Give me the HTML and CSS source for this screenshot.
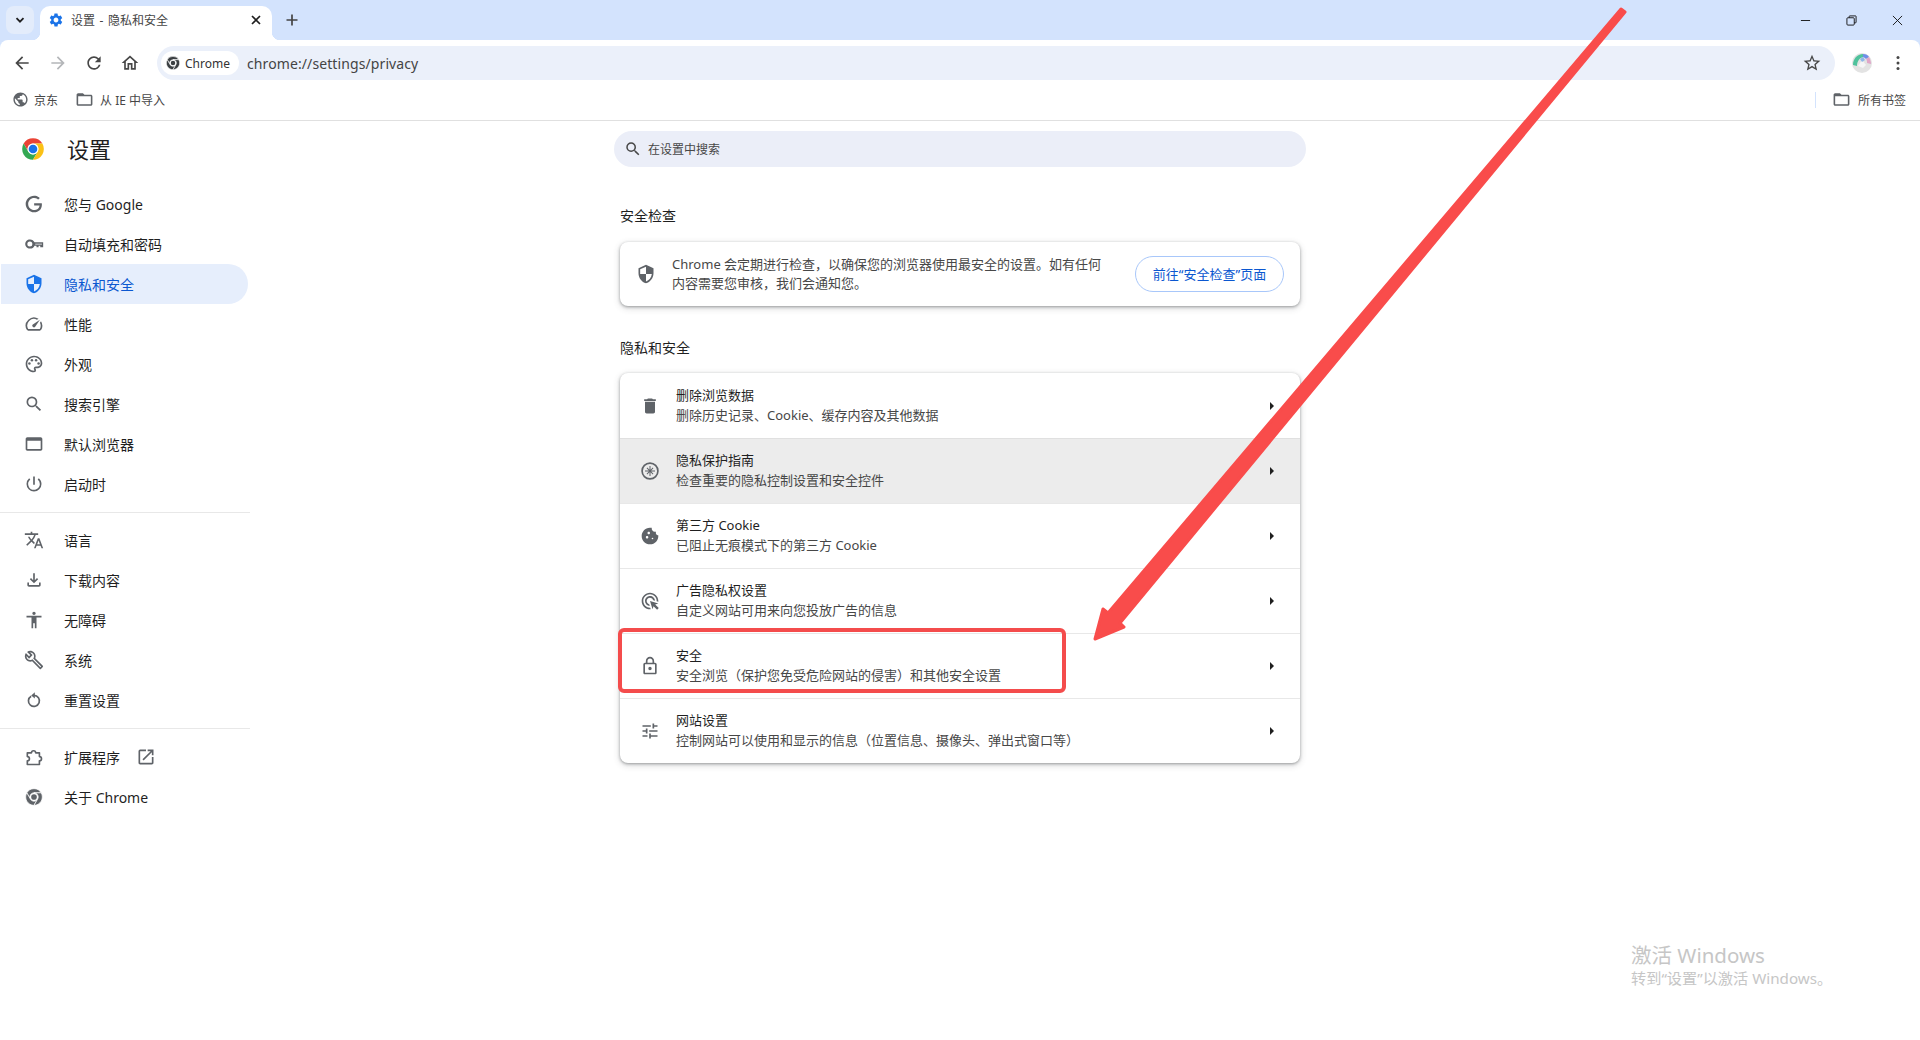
FILE: index.html
```html
<!DOCTYPE html>
<html lang="zh-CN">
  <head>
    <meta charset="UTF-8" />
    <title>设置 - 隐私和安全</title>
    <link rel="stylesheet" href="styles.css">
  </head>
  <body>
    <svg class="sprite" width="0" height="0">
      <symbol id="i-gear" viewBox="0 0 24 24"><path d="M19.14 12.94c.04-.3.06-.61.06-.94 0-.32-.02-.64-.07-.94l2.03-1.58a.49.49 0 0 0 .12-.61l-1.92-3.32a.488.488 0 0 0-.59-.22l-2.39.96c-.5-.38-1.03-.7-1.62-.94l-.36-2.54a.484.484 0 0 0-.48-.41h-3.84c-.24 0-.43.17-.47.41l-.36 2.54c-.59.24-1.13.57-1.62.94l-2.39-.96c-.22-.08-.47 0-.59.22L2.74 8.87c-.12.21-.08.47.12.61l2.03 1.58c-.05.3-.09.63-.09.94s.02.64.07.94l-2.03 1.58a.49.49 0 0 0-.12.61l1.92 3.32c.12.22.37.29.59.22l2.39-.96c.5.38 1.03.7 1.62.94l.36 2.54c.05.24.24.41.48.41h3.84c.24 0 .44-.17.47-.41l.36-2.54c.59-.24 1.13-.56 1.62-.94l2.39.96c.22.08.47 0 .59-.22l1.92-3.32c.12-.22.07-.47-.12-.61l-2.01-1.58zM12 15.6c-1.98 0-3.6-1.62-3.6-3.6s1.62-3.6 3.6-3.6 3.6 1.62 3.6 3.6-1.62 3.6-3.6 3.6z"/></symbol>
      <symbol id="i-back" viewBox="0 0 24 24"><path d="M20 11H7.83l5.59-5.59L12 4l-8 8 8 8 1.41-1.41L7.83 13H20v-2z"/></symbol>
      <symbol id="i-forward" viewBox="0 0 24 24"><path d="M12 4l-1.41 1.41L16.17 11H4v2h12.17l-5.58 5.59L12 20l8-8z"/></symbol>
      <symbol id="i-reload" viewBox="0 0 24 24"><path d="M17.65 6.35A7.958 7.958 0 0 0 12 4c-4.42 0-7.99 3.58-7.99 8s3.57 8 7.99 8c3.73 0 6.84-2.55 7.73-6h-2.08A5.99 5.99 0 0 1 12 18c-3.31 0-6-2.69-6-6s2.69-6 6-6c1.66 0 3.14.69 4.22 1.78L13 11h7V4l-2.35 2.35z"/></symbol>
      <symbol id="i-home" viewBox="0 0 24 24"><path d="M12 5.69l5 4.5V18h-2v-6H9v6H7v-7.81l5-4.5M12 3L2 12h3v8h6v-6h2v6h6v-8h3L12 3z"/></symbol>
      <symbol id="i-chrome" viewBox="0 0 24 24"><g stroke="#fff" stroke-width="0.9"><path d="M12 2A10 10 0 0 1 20.66 7H12A5 5 0 0 0 7.67 14.5L3.34 7A10 10 0 0 1 12 2Z"/><path d="M3.34 7L7.67 14.5A5 5 0 0 0 16.33 14.5L12 22A10 10 0 0 1 3.34 7Z"/><path d="M20.66 7H12A5 5 0 0 1 16.33 14.5L12 22A10 10 0 0 0 20.66 7Z"/></g><circle cx="12" cy="12" r="3.4"/></symbol>
      <symbol id="i-star" viewBox="0 0 24 24"><path d="M22 9.24l-7.19-.62L12 2 9.19 8.63 2 9.24l5.46 4.73L5.82 21 12 17.27 18.18 21l-1.63-7.03L22 9.24zM12 15.4l-3.76 2.27 1-4.28-3.32-2.88 4.38-.38L12 6.1l1.71 4.04 4.38.38-3.32 2.88 1 4.28L12 15.4z"/></symbol>
      <symbol id="i-more" viewBox="0 0 24 24"><circle cx="12" cy="5.5" r="1.8"/><circle cx="12" cy="12" r="1.8"/><circle cx="12" cy="18.5" r="1.8"/></symbol>
      <symbol id="i-globe" viewBox="0 0 24 24"><path d="M12 2C6.48 2 2 6.48 2 12s4.48 10 10 10 10-4.48 10-10S17.52 2 12 2zm-1 17.93c-3.95-.49-7-3.85-7-7.93 0-.62.08-1.21.21-1.79L9 15v1c0 1.1.9 2 2 2v1.93zm6.9-2.54c-.26-.81-1-1.39-1.9-1.39h-1v-3c0-.55-.45-1-1-1H8v-2h2c.55 0 1-.45 1-1V7h2c1.1 0 2-.9 2-2v-.41c2.93 1.19 5 4.06 5 7.41 0 2.08-.8 3.97-2.1 5.39z"/></symbol>
      <symbol id="i-folder" viewBox="0 0 24 24"><path d="M20 6h-8l-2-2H4c-1.1 0-1.99.9-1.99 2L2 18c0 1.1.9 2 2 2h16c1.1 0 2-.9 2-2V8c0-1.1-.9-2-2-2zm0 12H4V8h16v10z"/></symbol>
      <symbol id="i-google" viewBox="0 0 24 24"><path d="M21.35 11.1h-9.17v2.73h6.51c-.33 3.81-3.5 5.44-6.5 5.44C8.36 19.27 5 16.25 5 12c0-4.1 3.2-7.27 7.2-7.27 3.09 0 4.9 1.97 4.9 1.97L19 4.72S16.56 2 12.1 2C6.42 2 2.03 6.8 2 12c0 5.05 4.13 10 10.22 10 5.35 0 9.25-3.67 9.25-9.09 0-1.15-.15-1.81-.12-1.81z"/></symbol>
      <symbol id="i-key" viewBox="0 0 24 24"><path fill-rule="evenodd" d="M12.65 10A5.99 5.99 0 0 0 7 6.5c-3.04 0-5.5 2.46-5.5 5.5s2.46 5.5 5.5 5.5a5.99 5.99 0 0 0 5.65-3.5H15v2h2.5v-2h2v2H23v-6H12.65zM7 9a3 3 0 1 1 0 6 3 3 0 0 1 0-6zm6.5 2.6h8v1h-8z"/></symbol>
      <symbol id="i-shield" viewBox="0 0 24 24"><path d="M12 1L3 5v6c0 5.55 3.84 10.74 9 12 5.16-1.26 9-6.45 9-12V5l-9-4zm0 10.99h7c-.53 4.12-3.28 7.79-7 8.94V12H5V6.3l7-3.11v8.8z"/></symbol>
      <symbol id="i-speed" viewBox="0 0 24 24"><path d="M20.38 8.57l-1.23 1.85a8 8 0 0 1-.22 7.58H5.07A8 8 0 0 1 15.58 6.85l1.85-1.23A10 10 0 0 0 3.35 19a2 2 0 0 0 1.72 1h13.85a2 2 0 0 0 1.74-1 10 10 0 0 0-.27-10.44zm-9.79 6.84a2 2 0 0 0 2.83 0l5.66-8.49-8.49 5.66a2 2 0 0 0 0 2.83z"/></symbol>
      <symbol id="i-palette" viewBox="0 0 24 24"><path d="M12 22C6.49 22 2 17.51 2 12S6.49 2 12 2s10 4.04 10 9c0 3.31-2.69 6-6 6h-1.77c-.28 0-.5.22-.5.5 0 .12.05.23.13.33.41.47.64 1.06.64 1.67A2.5 2.5 0 0 1 12 22zm0-18c-4.41 0-8 3.59-8 8s3.59 8 8 8c.28 0 .5-.22.5-.5a.54.54 0 0 0-.14-.35c-.41-.46-.63-1.05-.63-1.65a2.5 2.5 0 0 1 2.5-2.5H16c2.21 0 4-1.79 4-4 0-3.86-3.59-7-8-7z"/><circle cx="6.5" cy="11.5" r="1.5"/><circle cx="9.5" cy="7.5" r="1.5"/><circle cx="14.5" cy="7.5" r="1.5"/><circle cx="17.5" cy="11.5" r="1.5"/></symbol>
      <symbol id="i-search" viewBox="0 0 24 24"><path d="M15.5 14h-.79l-.28-.27A6.471 6.471 0 0 0 16 9.5 6.5 6.5 0 1 0 9.5 16c1.61 0 3.09-.59 4.23-1.57l.27.28v.79l5 4.99L20.49 19l-4.99-5zm-6 0C7.01 14 5 11.99 5 9.5S7.01 5 9.5 5 14 7.01 14 9.5 11.99 14 9.5 14z"/></symbol>
      <symbol id="i-window" viewBox="0 0 24 24"><path d="M20 4H4c-1.11 0-2 .9-2 2v12c0 1.1.89 2 2 2h16c1.1 0 2-.9 2-2V6c0-1.1-.89-2-2-2zm0 14H4V8h16v10z"/></symbol>
      <symbol id="i-power" viewBox="0 0 24 24"><path d="M13 3h-2v10h2V3zm4.83 2.17l-1.42 1.42A6.92 6.92 0 0 1 19 12c0 3.87-3.13 7-7 7A6.995 6.995 0 0 1 7.58 6.58L6.17 5.17A8.932 8.932 0 0 0 3 12a9 9 0 0 0 18 0c0-2.74-1.23-5.18-3.17-6.83z"/></symbol>
      <symbol id="i-translate" viewBox="0 0 24 24"><path d="M12.87 15.07l-2.54-2.51.03-.03A17.52 17.52 0 0 0 14.07 6H17V4h-7V2H8v2H1v1.99h11.17C11.5 7.92 10.44 9.75 9 11.35 8.07 10.32 7.3 9.19 6.69 8h-2c.73 1.63 1.73 3.17 2.98 4.56l-5.09 5.02L4 19l5-5 3.11 3.11.76-2.04zM18.5 10h-2L12 22h2l1.12-3h4.75L21 22h2l-4.5-12zm-2.62 7l1.62-4.33L19.12 17h-3.24z"/></symbol>
      <symbol id="i-download" viewBox="0 0 24 24"><path d="M18 15v3H6v-3H4v3c0 1.1.9 2 2 2h12c1.1 0 2-.9 2-2v-3h-2zm-1-4l-1.41-1.41L13 12.17V4h-2v8.17L8.41 9.59 7 11l5 5 5-5z"/></symbol>
      <symbol id="i-access" viewBox="0 0 24 24"><path d="M12 2c1.1 0 2 .9 2 2s-.9 2-2 2-2-.9-2-2 .9-2 2-2zm9 7h-6v13h-2v-6h-2v6H9V9H3V7h18v2z"/></symbol>
      <symbol id="i-wrench" viewBox="0 0 24 24"><path d="M22.61 18.99l-9.08-9.08c.93-2.34.45-5.1-1.44-7C9.79.61 6.21.4 3.66 2.25L7.5 6.1 6.08 7.51 2.25 3.69C.4 6.23.61 9.82 2.91 12.11c1.86 1.86 4.57 2.35 6.89 1.48l9.11 9.11c.39.39 1.02.39 1.41 0l2.3-2.3c.4-.38.4-1.01-.01-1.41zm-3 1.6l-9.46-9.46c-.61.45-1.29.72-2 .82-1.36.2-2.79-.21-3.83-1.25C3.37 9.76 2.93 8.5 3 7.26l3.09 3.09 4.24-4.24-3.09-3.09c1.24-.07 2.49.37 3.44 1.31 1.08 1.08 1.49 2.57 1.24 3.96-.12.71-.42 1.37-.88 1.96l9.45 9.45-.88.89z"/></symbol>
      <symbol id="i-reset" viewBox="0 0 24 24"><path d="M8.6 7.4A6.6 6.6 0 1 0 12 6.5" fill="none" stroke="#5f6368" stroke-width="2"/><path d="M13 2.8v7.4L8.6 6.5z"/></symbol>
      <symbol id="i-ext" viewBox="0 0 24 24"><path d="M4 7h5a2.5 2.5 0 0 1 5 0h4.5v4.5a2.5 2.5 0 0 1 0 5V21H4v-4.5a2.5 2.5 0 0 0 0-5z" fill="none" stroke="#5f6368" stroke-width="2" stroke-linejoin="round"/></symbol>
      <symbol id="i-open" viewBox="0 0 24 24"><path d="M19 19H5V5h7V3H5a2 2 0 0 0-2 2v14c0 1.1.9 2 2 2h14c1.1 0 2-.9 2-2v-7h-2v7zM14 3v2h3.59l-9.83 9.83 1.41 1.41L19 6.41V10h2V3h-7z"/></symbol>
      <symbol id="i-trash" viewBox="0 0 24 24"><path d="M6 19c0 1.1.9 2 2 2h8c1.1 0 2-.9 2-2V7H6v12zM19 4h-3.5l-1-1h-5l-1 1H5v2h14V4z"/></symbol>
      <symbol id="i-guide" viewBox="0 0 24 24"><path fill-rule="evenodd" d="M12 1.5a10.5 10.5 0 1 1 0 21 10.5 10.5 0 0 1 0-21zm0 2a8.5 8.5 0 1 0 0 17 8.5 8.5 0 0 0 0-17z"/><path d="M11.4 6h1.2v12h-1.2zM6 11.4h12v1.2H6zM7.9 8.7l.8-.8 7.4 7.4-.8.8zM15.3 7.9l.8.8-7.4 7.4-.8-.8z"/></symbol>
      <symbol id="i-cookie" viewBox="0 0 24 24"><path d="M21.95 10.99c-1.79-.03-3.7-1.95-2.68-4.22-2.97 1-5.78-1.59-5.19-4.56C7.11.74 2 6.41 2 12c0 5.52 4.48 10 10 10 5.89 0 10.54-5.08 9.95-11.01zM8.5 15c-.83 0-1.5-.67-1.5-1.5S7.67 12 8.5 12s1.5.67 1.5 1.5S9.33 15 8.5 15zm2-5C9.67 10 9 9.33 9 8.5S9.67 7 10.5 7s1.5.67 1.5 1.5-.67 1.5-1.5 1.5zm4.5 6c-.55 0-1-.45-1-1s.45-1 1-1 1 .45 1 1-.45 1-1 1z"/></symbol>
      <symbol id="i-ads" viewBox="0 0 24 24"><path d="M11.71 17.99A5.993 5.993 0 0 1 6 12c0-3.31 2.69-6 6-6 3.22 0 5.84 2.53 5.99 5.71l-2.1-.63A3.999 3.999 0 0 0 12 8c-2.21 0-4 1.79-4 4 0 1.89 1.31 3.47 3.08 3.89l.63 2.1zM22 12c0 .3-.01.6-.04.9l-1.97-.59c.01-.1.01-.21.01-.31 0-4.42-3.58-8-8-8s-8 3.58-8 8 3.58 8 8 8c.1 0 .21 0 .31-.01l.59 1.97c-.3.03-.6.04-.9.04-5.52 0-10-4.48-10-10S6.48 2 12 2s10 4.48 10 10zm-3.77 4.26L22 15l-10-3 3 10 1.26-3.77 4.27 4.27 1.98-1.98-4.28-4.26z"/></symbol>
      <symbol id="i-lock" viewBox="0 0 24 24"><path d="M18 8h-1V6c0-2.76-2.24-5-5-5S7 3.24 7 6v2H6c-1.1 0-2 .9-2 2v10c0 1.1.9 2 2 2h12c1.1 0 2-.9 2-2V10c0-1.1-.9-2-2-2zM9 6c0-1.66 1.34-3 3-3s3 1.34 3 3v2H9V6zm9 14H6V10h12v10zm-6-3c1.1 0 2-.9 2-2s-.9-2-2-2-2 .9-2 2 .9 2 2 2z"/></symbol>
      <symbol id="i-tune" viewBox="0 0 24 24"><path d="M3 17v2h6v-2H3zM3 5v2h10V5H3zm10 16v-2h8v-2h-8v-2h-2v6h2zM7 9v2H3v2h4v2h2V9H7zm14 4v-2H11v2h10zm-6-4h2V7h4V5h-4V3h-2v6z"/></symbol>
    </svg>

    <header class="chrome">
      <div class="tabstrip">
        <button class="tabs-btn">
          <svg viewBox="0 0 12 12" class="chev"><path d="M2.5 4.2L6 7.7l3.5-3.5" /></svg>
        </button>
        <div class="tab">
          <svg class="ic16 blue"><use href="#i-gear" /></svg>
          <span class="tab-title">设置 - 隐私和安全</span>
          <svg viewBox="0 0 12 12" class="tab-close"><path d="M2 2l8 8M10 2l-8 8" /></svg>
        </div>
        <svg viewBox="0 0 14 14" class="tab-new"><path d="M7 1.5v11M1.5 7h11" /></svg>
        <div class="winctl">
          <span class="winbtn"><svg viewBox="0 0 12 12"><path d="M1 6h10" /></svg></span>
          <span class="winbtn"><svg viewBox="0 0 12 12"><rect x="1" y="3" width="8" height="8" rx="1" /><path d="M3.5 3V1.5a.5.5 0 0 1 .5-.5h6.5a.5.5 0 0 1 .5.5V8a.5.5 0 0 1-.5.5H9" /></svg></span>
          <span class="winbtn"><svg viewBox="0 0 12 12"><path d="M1 1l10 10M11 1L1 11" /></svg></span>
        </div>
      </div>

      <div class="toolbar">
        <span class="tool"><svg class="ic20"><use href="#i-back" /></svg></span>
        <span class="tool off"><svg class="ic20"><use href="#i-forward" /></svg></span>
        <span class="tool"><svg class="ic20"><use href="#i-reload" /></svg></span>
        <span class="tool"><svg class="ic20"><use href="#i-home" /></svg></span>
        <div class="omnibox">
          <span class="chip"><svg class="ic16 dark"><use href="#i-chrome" /></svg>Chrome</span>
          <span class="url">chrome://settings/privacy</span>
          <svg class="ic20 star"><use href="#i-star" /></svg>
        </div>
        <span class="tool">
          <svg viewBox="0 0 20 20" class="avatar">
            <circle cx="10" cy="10" r="10" fill="#e3e3e3" />
            <path d="M1 12C1 6 5 1 11 1l1 3C8 4 5 8 5 13z" fill="#4fc29c" />
            <path d="M11 1c3 0 5 1 6 3l-3 2c-1-1-2-2-3-2z" fill="#6f8ee8" />
            <path d="M17 4c1 2 2 4 2 7l-4-1c0-2 0-3-1-4z" fill="#e0a6c8" />
            <path d="M6 13l4-6 4 5-3 3z" fill="#f6f6f6" />
            <path d="M8 6l3-2 2 3-3 2z" fill="#8fb6e8" />
          </svg>
        </span>
        <span class="tool"><svg class="ic20"><use href="#i-more" /></svg></span>
      </div>

      <div class="bookmarks">
        <span class="bm"><svg class="ic17"><use href="#i-globe" /></svg>京东</span>
        <span class="bm bm-folder"><svg class="ic19"><use href="#i-folder" /></svg>从 IE 中导入</span>
        <span class="bm-sep"></span>
        <span class="bm bm-all"><svg class="ic19"><use href="#i-folder" /></svg>所有书签</span>
      </div>
    </header>

    <div class="page">
      <nav class="side">
        <div class="side-head">
          <svg viewBox="0 0 24 24" class="logo">
            <path fill="#ea4335" d="M12 2A10 10 0 0 1 20.66 7H12A5 5 0 0 0 7.67 14.5L3.34 7A10 10 0 0 1 12 2Z" />
            <path fill="#34a853" d="M3.34 7L7.67 14.5A5 5 0 0 0 16.33 14.5L12 22A10 10 0 0 1 3.34 7Z" />
            <path fill="#fbc116" d="M20.66 7H12A5 5 0 0 1 16.33 14.5L12 22A10 10 0 0 0 20.66 7Z" />
            <circle cx="12" cy="12" r="5" fill="#fff" />
            <circle cx="12" cy="12" r="4" fill="#1a73e8" />
          </svg>
          <span class="side-title">设置</span>
        </div>
        <a class="item"><svg class="ic20"><use href="#i-google" /></svg>您与 Google</a>
        <a class="item"><svg class="ic20"><use href="#i-key" /></svg>自动填充和密码</a>
        <a class="item active"><svg class="ic20"><use href="#i-shield" /></svg>隐私和安全</a>
        <a class="item"><svg class="ic20"><use href="#i-speed" /></svg>性能</a>
        <a class="item"><svg class="ic20"><use href="#i-palette" /></svg>外观</a>
        <a class="item"><svg class="ic20"><use href="#i-search" /></svg>搜索引擎</a>
        <a class="item"><svg class="ic20"><use href="#i-window" /></svg>默认浏览器</a>
        <a class="item"><svg class="ic20"><use href="#i-power" /></svg>启动时</a>
        <hr class="tight" />
        <a class="item"><svg class="ic20"><use href="#i-translate" /></svg>语言</a>
        <a class="item"><svg class="ic20"><use href="#i-download" /></svg>下载内容</a>
        <a class="item"><svg class="ic20"><use href="#i-access" /></svg>无障碍</a>
        <a class="item"><svg class="ic20"><use href="#i-wrench" /></svg>系统</a>
        <a class="item"><svg class="ic20"><use href="#i-reset" /></svg>重置设置</a>
        <hr />
        <a class="item"><svg class="ic20"><use href="#i-ext" /></svg>扩展程序<svg class="ic20 open"><use href="#i-open" /></svg></a>
        <a class="item"><svg class="ic20"><use href="#i-chrome" /></svg>关于 Chrome</a>
      </nav>

      <main class="content">
        <div class="search">
          <svg class="ic18"><use href="#i-search" /></svg>
          <span>在设置中搜索</span>
        </div>

        <section class="group">
          <h2 class="first">安全检查</h2>
          <div class="card check">
            <svg class="ic20"><use href="#i-shield" /></svg>
            <p>Chrome 会定期进行检查，以确保您的浏览器使用最安全的设置。如有任何内容需要您审核，我们会通知您。</p>
            <button class="go">前往“安全检查”页面</button>
          </div>
        </section>

        <section class="group">
          <h2>隐私和安全</h2>
          <div class="card">
            <div class="row">
              <svg class="ic20"><use href="#i-trash" /></svg>
              <div class="row-text"><div class="label">删除浏览数据</div><div class="sub">删除历史记录、Cookie、缓存内容及其他数据</div></div>
              <i class="arrow"></i>
            </div>
            <div class="row hover">
              <svg class="ic20"><use href="#i-guide" /></svg>
              <div class="row-text"><div class="label">隐私保护指南</div><div class="sub">检查重要的隐私控制设置和安全控件</div></div>
              <i class="arrow"></i>
            </div>
            <div class="row">
              <svg class="ic20"><use href="#i-cookie" /></svg>
              <div class="row-text"><div class="label">第三方 Cookie</div><div class="sub">已阻止无痕模式下的第三方 Cookie</div></div>
              <i class="arrow"></i>
            </div>
            <div class="row">
              <svg class="ic20"><use href="#i-ads" /></svg>
              <div class="row-text"><div class="label">广告隐私权设置</div><div class="sub">自定义网站可用来向您投放广告的信息</div></div>
              <i class="arrow"></i>
            </div>
            <div class="row">
              <svg class="ic20"><use href="#i-lock" /></svg>
              <div class="row-text"><div class="label">安全</div><div class="sub">安全浏览（保护您免受危险网站的侵害）和其他安全设置</div></div>
              <i class="arrow"></i>
              <div class="mark"></div>
            </div>
            <div class="row">
              <svg class="ic20"><use href="#i-tune" /></svg>
              <div class="row-text"><div class="label">网站设置</div><div class="sub">控制网站可以使用和显示的信息（位置信息、摄像头、弹出式窗口等）</div></div>
              <i class="arrow"></i>
            </div>
          </div>
        </section>
      </main>
    </div>

    <!-- red annotation arrow drawn over the screenshot -->
    <svg class="annot" viewBox="0 0 1920 1040">
      <path d="M1621 9L1625 12L1120 623L1124 627L1095 639L1103 609L1108 613Z" />
    </svg>

    <div class="watermark">
      <div class="wm-big">激活 Windows</div>
      <div class="wm-small">转到“设置”以激活 Windows。</div>
    </div>
  </body>
</html>
```

FILE: styles.css
```css
* {
  box-sizing: border-box;
}
body {
  position: relative;
  margin: 0;
  height: 1040px;
  overflow: hidden;
  background: #fff;
  color: #1f1f1f;
  font-family: "Noto Sans", "Noto Sans CJK SC", sans-serif;
  font-size: 14px;
}
.sprite {
  position: absolute;
}
svg {
  flex: none;
  fill: #5f6368;
}
.ic16 {
  width: 16px;
  height: 16px;
}
.ic17 {
  width: 17px;
  height: 17px;
}
.ic18 {
  width: 18px;
  height: 18px;
}
.ic19 {
  width: 19px;
  height: 19px;
}
.ic20 {
  width: 20px;
  height: 20px;
}
.blue {
  fill: #1a73e8;
}
.dark {
  fill: #3c4043;
}

/* browser frame */
.tabstrip {
  display: flex;
  align-items: flex-start;
  height: 40px;
  background: #d3e3fd;
}
.tabs-btn {
  width: 28px;
  height: 28px;
  margin: 6px 6px 0;
  padding: 0;
  border: none;
  border-radius: 8px;
  background: #e3ecfb;
  display: flex;
  align-items: center;
  justify-content: center;
}
.chev {
  width: 12px;
  height: 12px;
  fill: none;
  stroke: #1f1f1f;
  stroke-width: 1.8;
}
.tab {
  position: relative;
  display: flex;
  align-items: center;
  width: 232px;
  height: 34px;
  margin-top: 6px;
  padding: 0 10px 6px 8px;
  background: #fff;
  border-radius: 10px 10px 0 0;
  font-size: 12px;
}
.tab::before,
.tab::after {
  content: "";
  position: absolute;
  bottom: 0;
  width: 8px;
  height: 8px;
}
.tab::before {
  left: -8px;
  background: radial-gradient(circle at 0 0, #d3e3fd 8px, #fff 8.5px);
}
.tab::after {
  right: -8px;
  background: radial-gradient(circle at 100% 0, #d3e3fd 8px, #fff 8.5px);
}
.tab-title {
  flex: 1;
  margin-left: 7px;
  color: #444;
  word-spacing: 1.5px;
}
.tab-close {
  width: 12px;
  height: 12px;
  fill: none;
  stroke: #1f1f1f;
  stroke-width: 1.7;
}
.tab-new {
  width: 14px;
  height: 14px;
  margin: 13px 0 0 13px;
  fill: none;
  stroke: #444;
  stroke-width: 1.7;
}
.winctl {
  display: flex;
  margin-left: auto;
}
.winbtn {
  display: flex;
  align-items: center;
  justify-content: center;
  width: 46px;
  height: 40px;
}
.winbtn svg {
  width: 11px;
  height: 11px;
  fill: none;
  stroke: #111;
  stroke-width: 1;
}

.toolbar {
  display: flex;
  align-items: center;
  height: 46px;
  padding: 6px 4px;
  background: #fff;
  border-radius: 8px 8px 0 0;
}
.chrome {
  background: #d3e3fd;
}
.tool {
  display: flex;
  align-items: center;
  justify-content: center;
  width: 36px;
  height: 34px;
}
.tool svg {
  fill: #474747;
}
.tool.off svg {
  fill: #b4b6b9;
}
.omnibox {
  flex: 1;
  display: flex;
  align-items: center;
  height: 34px;
  margin: 0 9px;
  padding-left: 4px;
  padding-right: 13px;
  background: #ebf0fa;
  border-radius: 17px;
}
.chip {
  display: flex;
  align-items: center;
  gap: 4px;
  width: 78px;
  height: 24px;
  padding-left: 4px;
  background: #fff;
  border-radius: 12px;
  font-size: 12px;
  color: #333;
}
.url {
  flex: 1;
  margin-left: 8px;
  font-size: 14px;
  letter-spacing: 0.1px;
  color: #444;
}
.star {
  fill: #474747;
}
.avatar {
  width: 20px;
  height: 20px;
}
.bookmarks {
  display: flex;
  align-items: center;
  height: 35px;
  padding: 0 14px 7px 12px;
  background: #fff;
  border-bottom: 1px solid #e0e0e0;
  font-size: 12px;
  color: #474747;
}
.bm {
  display: flex;
  align-items: center;
  gap: 5px;
}
.bm-folder {
  margin-left: 17px;
  gap: 6px;
}
.bm-sep {
  width: 1px;
  height: 16px;
  margin-left: auto;
  background: #d3e3fd;
}
.bm-all {
  margin-left: 16px;
  gap: 7px;
}

/* settings page */
.page {
  display: grid;
  grid-template-columns: 250px 1fr 250px;
  background: #fff;
}
.side hr {
  height: 1px;
  margin: 8px 0;
  border: none;
  background: #e8e8e8;
}
.side hr.tight {
  margin-bottom: 7px;
}
.side-head {
  display: flex;
  align-items: center;
  height: 63px;
  padding: 0 0 8px 22px;
}
.logo {
  width: 26px;
  height: 26px;
  margin-left: -2px;
}
.side-title {
  margin-left: 21px;
  padding-bottom: 2px;
  font-size: 22px;
}
.item {
  display: flex;
  align-items: center;
  gap: 20px;
  width: 247px;
  height: 40px;
  margin-left: 1px;
  padding-left: 23px;
  border-radius: 0 20px 20px 0;
}
.item.active {
  background: #e6eefc;
  color: #0b57d0;
}
.item.active svg {
  fill: #1a73e8;
}
.item .open {
  margin-left: -4px;
}

.content {
  justify-self: center;
  width: 692px;
  padding-top: 10px;
}
.search {
  display: flex;
  align-items: center;
  gap: 6px;
  height: 36px;
  padding-left: 10px;
  background: #ebeef8;
  border-radius: 18px;
  font-size: 12px;
  color: #474747;
}
.search svg {
  fill: #474747;
}
.group {
  margin: 0 6px;
}
.group h2 {
  margin: 32px 0 15px;
  font-size: 14px;
  line-height: 20px;
  font-weight: 400;
}
.group h2.first {
  margin: 39px 0 16px;
}
.card {
  background: #fff;
  border-radius: 8px;
  box-shadow: 0 1px 3px rgba(60, 64, 67, 0.45), 0 2px 6px 1px rgba(60, 64, 67, 0.16);
}
.check {
  display: flex;
  align-items: center;
  height: 64px;
  padding: 0 16px;
}
.check p {
  width: 436px;
  margin: 0 0 0 16px;
  font-size: 13px;
  line-height: 19px;
  color: #474747;
}
.go {
  width: 149px;
  height: 36px;
  margin-left: auto;
  padding: 0 0 2px;
  background: #fff;
  border: 1px solid #a8c7fa;
  border-radius: 18px;
  font-family: inherit;
  font-size: 13px;
  color: #0b57d0;
}
.row {
  position: relative;
  display: flex;
  align-items: center;
  gap: 16px;
  height: 65px;
  padding: 0 26px 0 20px;
  border-top: 1px solid #e8e8e8;
}
.row:first-child {
  border-top: none;
  border-radius: 8px 8px 0 0;
}
.row.hover {
  background: #ececec;
  border-top-color: #e0e0e0;
}
.row-text {
  flex: 1;
  padding-bottom: 2px;
}
.label {
  font-size: 13px;
  line-height: 20px;
}
.sub {
  font-size: 13px;
  line-height: 20px;
  color: #474747;
}
.arrow {
  width: 0;
  height: 0;
  border-left: 4px solid #1f1f1f;
  border-top: 4px solid transparent;
  border-bottom: 4px solid transparent;
}

/* annotations on top of the page */
.mark {
  position: absolute;
  top: -6px;
  left: -2px;
  width: 448px;
  height: 65px;
  border: 4px solid #f44c4c;
  border-radius: 6px;
}
.annot {
  position: absolute;
  left: 0;
  top: 0;
  width: 1920px;
  height: 1040px;
  pointer-events: none;
  fill: #f94c4b;
  stroke: #f94c4b;
  stroke-width: 3;
  stroke-linejoin: round;
}
.watermark {
  position: absolute;
  left: 1631px;
  top: 941px;
  color: #c6c6c6;
}
.wm-big {
  font-size: 20.5px;
  line-height: 28px;
}
.wm-small {
  font-size: 15.2px;
  line-height: 19px;
}
```
